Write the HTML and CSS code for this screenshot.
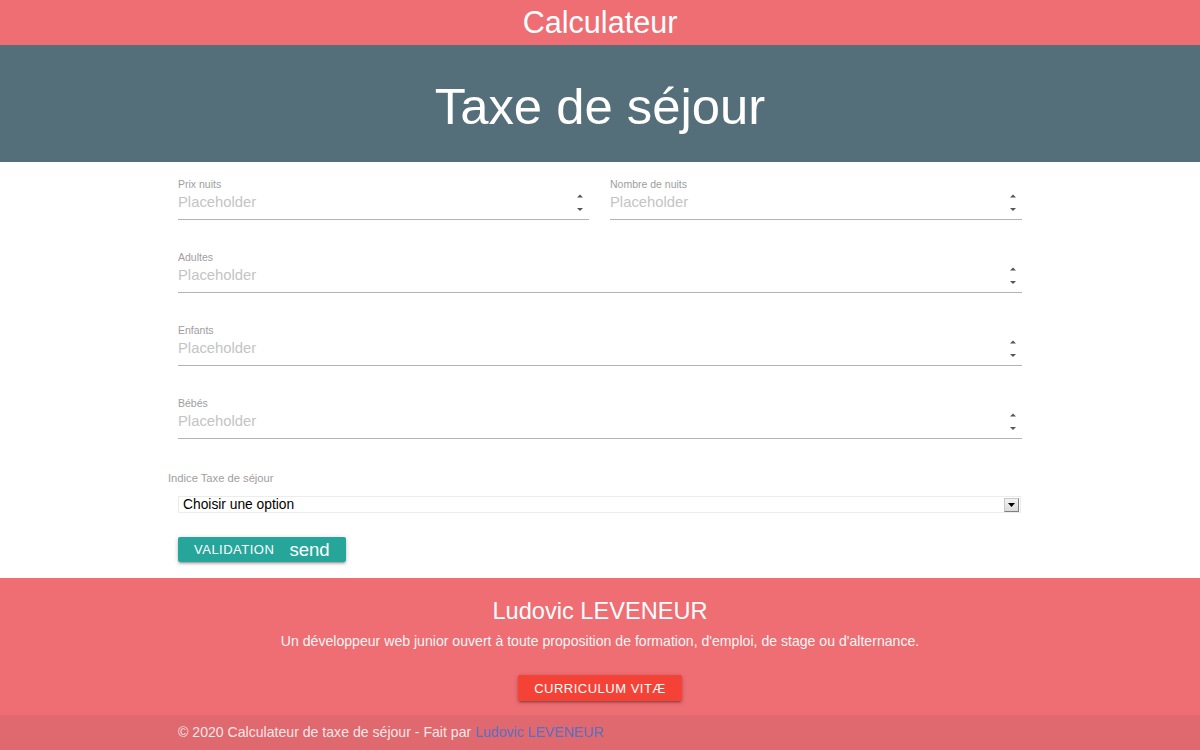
FILE: index.html
```html
<!DOCTYPE html>
<html lang="fr">
<head>
<meta charset="utf-8">
<title>Calculateur de taxe de séjour</title>
<link rel="stylesheet" href="styles.css">
</head>
<body>
<nav class="topbar"><span class="brand">Calculateur</span></nav>
<header class="banner"><h2 class="banner-title">Taxe de séjour</h2></header>
<main class="container">
  <form class="calc-form">
    <div class="row-two">
      <div class="field">
        <label class="field-label">Prix nuits</label>
        <div class="field-line">
          <input class="field-input" type="text" placeholder="Placeholder">
          <svg class="spin" width="10" height="24" viewBox="0 0 10 24"><path d="M2 7.5 L5 4.5 L8 7.5 Z" fill="#555"/><path d="M2 18 L5 21 L8 18 Z" fill="#555"/></svg>
        </div>
      </div>
      <div class="field">
        <label class="field-label">Nombre de nuits</label>
        <div class="field-line">
          <input class="field-input" type="text" placeholder="Placeholder">
          <svg class="spin" width="10" height="24" viewBox="0 0 10 24"><path d="M2 7.5 L5 4.5 L8 7.5 Z" fill="#555"/><path d="M2 18 L5 21 L8 18 Z" fill="#555"/></svg>
        </div>
      </div>
    </div>
    <div class="field">
      <label class="field-label">Adultes</label>
      <div class="field-line">
        <input class="field-input" type="text" placeholder="Placeholder">
        <svg class="spin" width="10" height="24" viewBox="0 0 10 24"><path d="M2 7.5 L5 4.5 L8 7.5 Z" fill="#555"/><path d="M2 18 L5 21 L8 18 Z" fill="#555"/></svg>
      </div>
    </div>
    <div class="field">
      <label class="field-label">Enfants</label>
      <div class="field-line">
        <input class="field-input" type="text" placeholder="Placeholder">
        <svg class="spin" width="10" height="24" viewBox="0 0 10 24"><path d="M2 7.5 L5 4.5 L8 7.5 Z" fill="#555"/><path d="M2 18 L5 21 L8 18 Z" fill="#555"/></svg>
      </div>
    </div>
    <div class="field">
      <label class="field-label">Bébés</label>
      <div class="field-line">
        <input class="field-input" type="text" placeholder="Placeholder">
        <svg class="spin" width="10" height="24" viewBox="0 0 10 24"><path d="M2 7.5 L5 4.5 L8 7.5 Z" fill="#555"/><path d="M2 18 L5 21 L8 18 Z" fill="#555"/></svg>
      </div>
    </div>
    <label class="select-label">Indice Taxe de séjour</label>
    <div class="select-wrap">
      <select class="select">
        <option>Choisir une option</option>
      </select>
      <span class="select-arrow"><svg width="7" height="4" viewBox="0 0 7 4"><path d="M0 0 H7 L3.5 4 Z" fill="#000"/></svg></span>
    </div>
    <div class="actions">
      <button class="btn-validate" type="button"><span class="btn-text">VALIDATION</span><span class="btn-icon">send</span></button>
    </div>
  </form>
</main>
<footer class="page-footer">
  <div class="footer-main">
    <h5 class="footer-name">Ludovic LEVENEUR</h5>
    <p class="footer-desc">Un développeur web junior ouvert à toute proposition de formation, d'emploi, de stage ou d'alternance.</p>
    <a class="btn-cv" href="#">CURRICULUM VITÆ</a>
  </div>
  <div class="footer-copyright">
    <div class="copyright-inner">© 2020 Calculateur de taxe de séjour - Fait par <a class="copyright-link" href="#">Ludovic LEVENEUR</a></div>
  </div>
</footer>
</body>
</html>
```

FILE: styles.css
```css
* { box-sizing: border-box; }

html, body {
  margin: 0;
  padding: 0;
}

body {
  font-family: "Liberation Sans", Arial, Helvetica, sans-serif;
  background: #ffffff;
  color: rgba(0, 0, 0, 0.87);
}

.topbar {
  height: 45px;
  background: #ee6e73;
  display: flex;
  align-items: center;
  justify-content: center;
}

.brand {
  color: #ffffff;
  font-size: 30.6px;
  line-height: 45px;
}

.banner {
  height: 117px;
  background: #546e7a;
  display: flex;
  align-items: center;
  justify-content: center;
  padding-top: 6px;
}

.banner-title {
  margin: 0;
  color: #ffffff;
  font-weight: 400;
  font-size: 50.8px;
  line-height: 56px;
}

.container {
  width: 844px;
  margin: 0 auto;
  padding: 16px 0 16px;
}

.calc-form {
  display: flex;
  flex-direction: column;
}

.row-two {
  display: grid;
  grid-template-columns: 411px 412px;
  column-gap: 21px;
}

.field {
  display: flex;
  flex-direction: column;
  margin-bottom: 31px;
}

.field-label {
  font-size: 10.5px;
  line-height: 12px;
  color: #9e9e9e;
}

.field-line {
  display: flex;
  align-items: flex-start;
  border-bottom: 1px solid #b4b4b4;
  padding-bottom: 5px;
}

.field-input {
  flex: 1;
  min-width: 0;
  height: 24px;
  line-height: 24px;
  border: none;
  outline: none;
  padding: 0;
  margin: 0;
  background: transparent;
  font-family: "Liberation Sans", Arial, Helvetica, sans-serif;
  font-size: 14.8px;
  color: rgba(0, 0, 0, 0.87);
}

.field-input::placeholder {
  color: #c4c4c4;
}

.spin {
  display: block;
  margin-right: 4px;
}

.select-label {
  margin: 2px 0 0 -10px;
  font-size: 11.2px;
  line-height: 12px;
  color: #9e9e9e;
}

.select-wrap {
  margin-top: 12px;
  width: 843px;
  height: 17px;
  display: flex;
  align-items: center;
  border: 1px solid #ececec;
  background: #ffffff;
}

.select {
  flex: 1;
  height: 15px;
  appearance: none;
  -webkit-appearance: none;
  border: none;
  outline: none;
  background: transparent;
  padding: 0 0 0 4px;
  margin: 0;
  font-family: "Liberation Sans", Arial, Helvetica, sans-serif;
  font-size: 13.8px;
  line-height: 15px;
  color: #000000;
}

.select-arrow {
  width: 15px;
  height: 14px;
  margin-right: 1px;
  display: flex;
  align-items: center;
  justify-content: center;
  background: linear-gradient(#f2f2f2, #dcdcdc);
  border: 1px solid #c8c8c8;
  border-right-color: #808080;
  border-bottom-color: #808080;
}

.actions {
  margin-top: 24px;
  display: flex;
}

.btn-validate {
  height: 25px;
  padding: 0 16px;
  border: none;
  border-radius: 2px;
  background: #26a69a;
  color: #ffffff;
  display: flex;
  align-items: center;
  font-family: "Liberation Sans", Arial, Helvetica, sans-serif;
  cursor: pointer;
  box-shadow: 0 2px 2px 0 rgba(0,0,0,0.14), 0 3px 1px -2px rgba(0,0,0,0.12), 0 1px 5px 0 rgba(0,0,0,0.2);
}

.btn-text {
  font-size: 13px;
  letter-spacing: 0.5px;
}

.btn-icon {
  margin-left: 15px;
  font-size: 18.6px;
}

.page-footer {
  background: #ee6e73;
  color: #ffffff;
}

.footer-main {
  height: 137px;
  display: flex;
  flex-direction: column;
  align-items: center;
  padding-top: 20px;
}

.footer-name {
  margin: 0;
  font-weight: 400;
  font-size: 23.6px;
  line-height: 26px;
  color: #ffffff;
}

.footer-desc {
  margin: 7px 0 0;
  font-size: 14.1px;
  line-height: 20px;
  color: #f5f5f5;
}

.btn-cv {
  margin-top: 24px;
  height: 26px;
  padding: 0 16px;
  display: flex;
  align-items: center;
  background: #f44336;
  color: #ffffff;
  text-decoration: none;
  font-size: 13px;
  letter-spacing: 0.5px;
  border-radius: 2px;
  box-shadow: 0 2px 2px 0 rgba(0,0,0,0.14), 0 3px 1px -2px rgba(0,0,0,0.12), 0 1px 5px 0 rgba(0,0,0,0.2);
}

.footer-copyright {
  height: 35px;
  background: rgba(51, 51, 51, 0.08);
  color: rgba(255, 255, 255, 0.85);
}

.copyright-inner {
  width: 844px;
  margin: 0 auto;
  font-size: 14.1px;
  line-height: 35px;
}

.copyright-link {
  color: #5b6fc3;
  text-decoration: none;
}
```
